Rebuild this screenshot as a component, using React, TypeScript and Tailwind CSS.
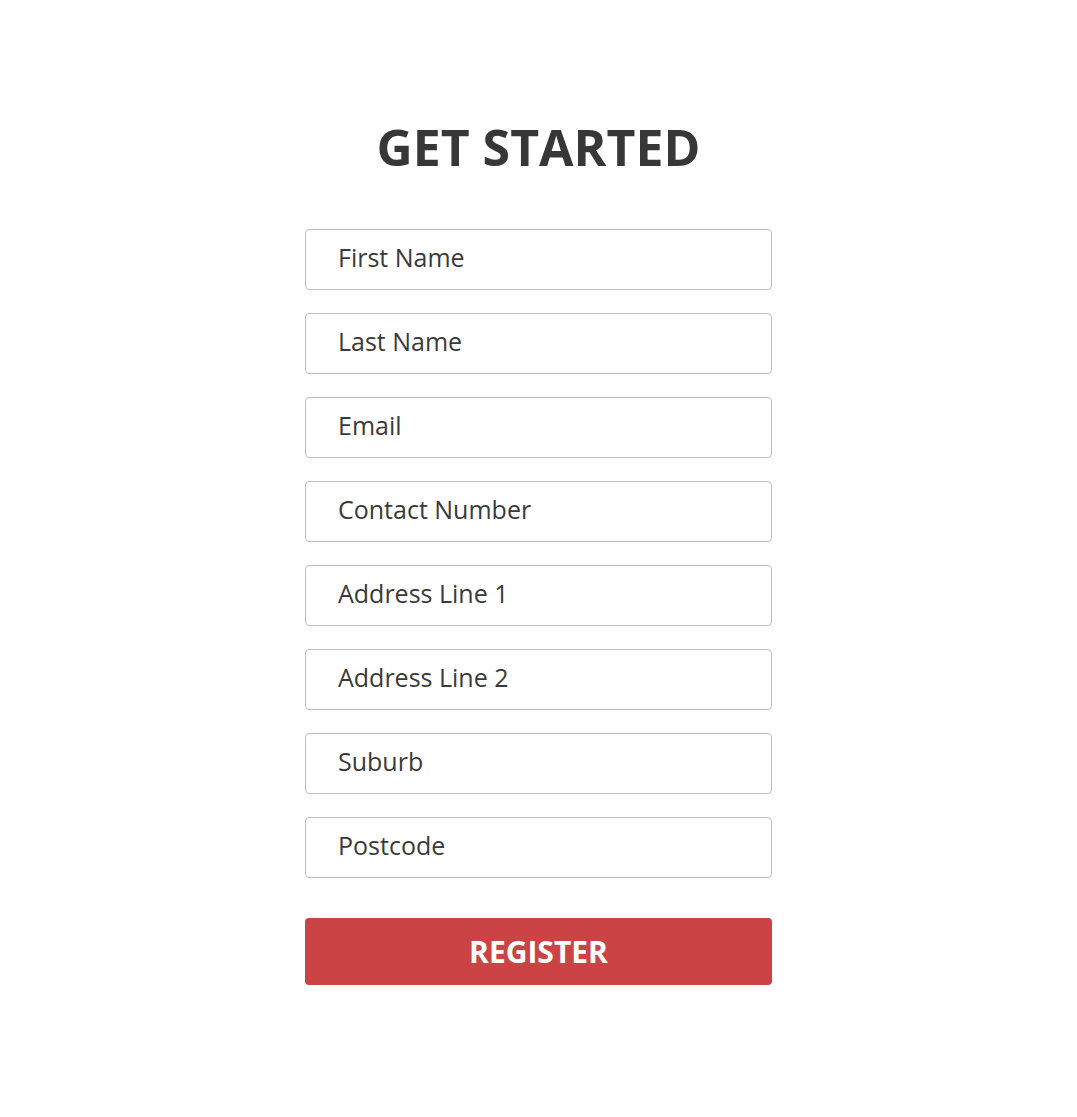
import React from "react";

const fields = [
  "First Name",
  "Last Name",
  "Email",
  "Contact Number",
  "Address Line 1",
  "Address Line 2",
  "Suburb",
  "Postcode",
];

export default function App() {
  return (
    <div
      className="min-h-[1117px] w-full bg-white flex justify-center"
      style={{ fontFamily: '"Open Sans", sans-serif' }}
    >
      <div className="w-[467px] pt-[114px] flex flex-col">
        <h1 className="text-center text-[50px] leading-[66px] font-bold text-[#373737]">
          GET STARTED
        </h1>
        <form className="mt-[49px] flex flex-col gap-[23px]" onSubmit={(e) => e.preventDefault()}>
          {fields.map((f) => (
            <input
              key={f}
              placeholder={f}
              className="h-[61px] w-full rounded-[4px] border border-[#bdbdbd] pl-[32px] pb-[5px] text-[25px] text-[#333] placeholder:text-[#3a3a3a] outline-none"
            />
          ))}
          <button
            type="submit"
            className="mt-[17px] h-[67px] w-full rounded-[4px] bg-[#cb4345] text-white text-[30px] font-bold"
          >
            REGISTER
          </button>
        </form>
      </div>
    </div>
  );
}
